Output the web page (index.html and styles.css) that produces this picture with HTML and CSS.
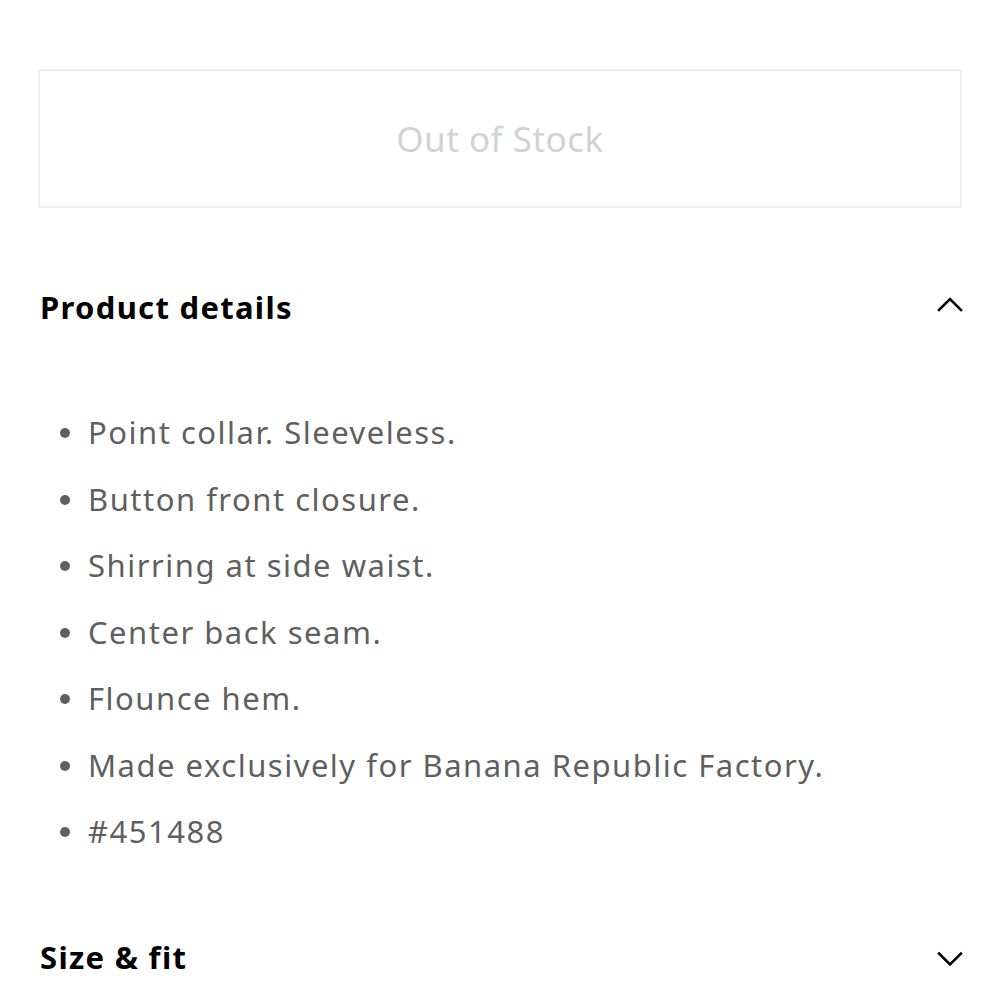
FILE: index.html
```html
<!DOCTYPE html>
<html lang="en">
<head>
    <meta charset="UTF-8">
    <meta name="viewport" content="width=device-width, initial-scale=1.0">
    <title>Product details</title>
    <link rel="stylesheet" href="styles.css">
</head>
<body>
    <main class="product-panel">
        <button class="btn-stock" disabled>Out of Stock</button>

        <section class="accordion open">
            <div class="accordion-header">
                <h2>Product details</h2>
                <svg class="chevron" width="28" height="22" viewBox="0 0 28 22" fill="none" stroke="#000" stroke-width="2.6" stroke-linecap="square">
                    <path d="M3 14 L14 3 L25 14"/>
                </svg>
            </div>
            <ul class="detail-list">
                <li>Point collar. Sleeveless.</li>
                <li>Button front closure.</li>
                <li>Shirring at side waist.</li>
                <li>Center back seam.</li>
                <li>Flounce hem.</li>
                <li>Made exclusively for Banana Republic Factory.</li>
                <li>#451488</li>
            </ul>
        </section>

        <section class="accordion">
            <div class="accordion-header">
                <h2>Size &amp; fit</h2>
                <svg class="chevron" width="28" height="22" viewBox="0 0 28 22" fill="none" stroke="#000" stroke-width="2.6" stroke-linecap="square">
                    <path d="M3 7.5 L14 18.5 L25 7.5"/>
                </svg>
            </div>
        </section>
    </main>
</body>
</html>
```

FILE: styles.css
```css
* {
    margin: 0;
    padding: 0;
    box-sizing: border-box;
}

body {
    font-family: "Noto Sans", Lato, sans-serif;
    background: #fff;
    color: #000;
}

.product-panel {
    padding: 69px 38px 0;
}

/* Disabled add-to-bag button */
.btn-stock {
    display: block;
    width: 100%;
    height: 139px;
    background: #fff;
    border: 2px solid #f0f0f0;
    font-family: inherit;
    font-size: 35px;
    letter-spacing: 0.5px;
    color: #d2d2d2;
}

/* Accordion sections */
.accordion-header {
    display: flex;
    align-items: center;
    justify-content: space-between;
    height: 40px;
}

.accordion-header h2 {
    font-size: 31px;
    line-height: 40px;
    font-weight: 700;
    letter-spacing: 1.3px;
    padding-left: 2px;
}

.chevron {
    margin-right: -2px;
}

.accordion.open .accordion-header {
    margin-top: 79px;
}

.detail-list {
    list-style: none;
    padding: 72px 0 0 22px;
}

.detail-list li {
    position: relative;
    padding-left: 28px;
    font-size: 31px;
    line-height: 66.5px;
    letter-spacing: 1.5px;
    color: #5f5f5f;
}

.detail-list li::before {
    content: '';
    position: absolute;
    left: 0;
    top: 50%;
    width: 10px;
    height: 10px;
    margin-top: -4px;
    border-radius: 50%;
    background: #5f5f5f;
}

.accordion:last-child .accordion-header {
    margin-top: 72px;
}
```
